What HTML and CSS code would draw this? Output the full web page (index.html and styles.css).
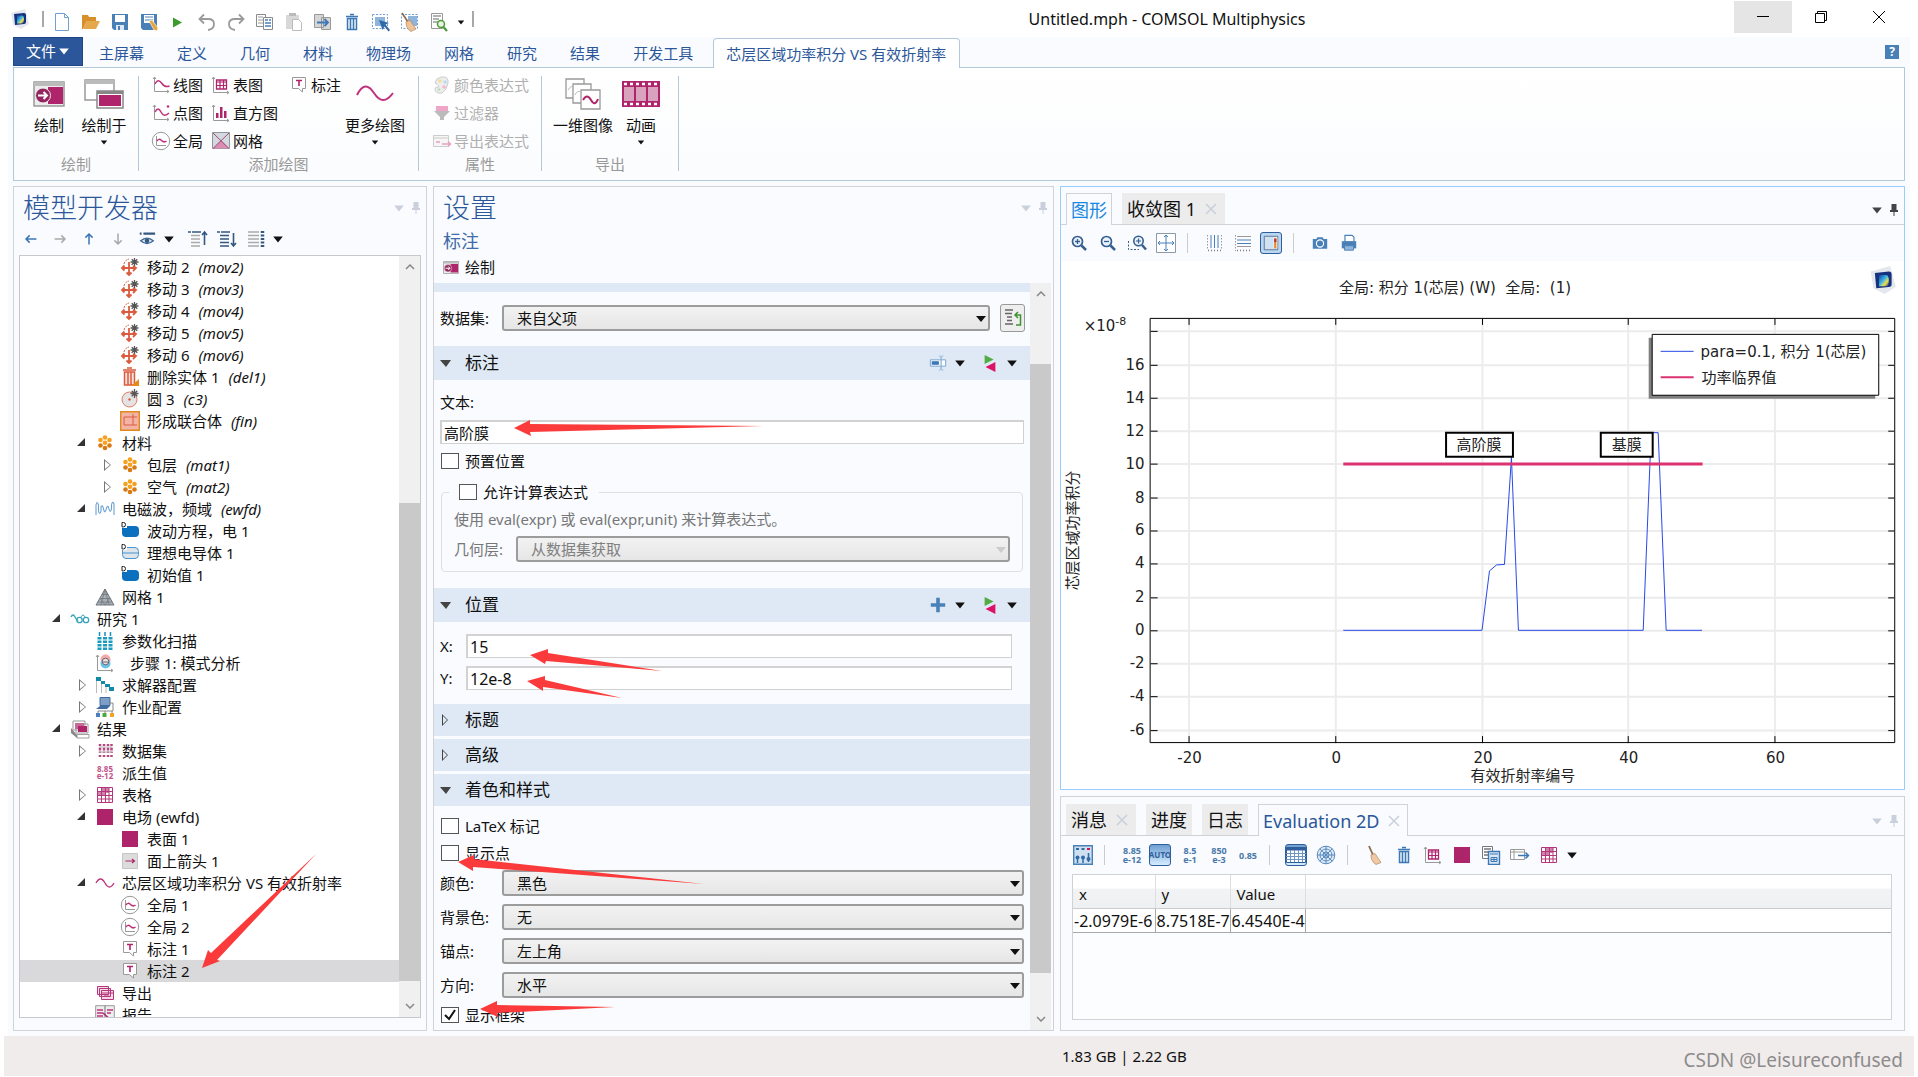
FILE: index.html
```html
<!DOCTYPE html>
<html lang="zh-CN">
<head>
<meta charset="utf-8">
<title>Untitled.mph - COMSOL Multiphysics</title>
<link rel="stylesheet" href="styles.css">
</head>
<body>
<svg class="sprite" aria-hidden="true">
  <defs>
    <linearGradient id="cube" x1="0" y1="0" x2="1" y2="1"><stop offset="0" stop-color="#1b3f9c"/><stop offset=".45" stop-color="#39b6e8"/><stop offset=".7" stop-color="#f5e04a"/><stop offset="1" stop-color="#123a92"/></linearGradient>
  </defs>
  <symbol id="logo" viewBox="0 0 20 20"><path d="M1 4 15 0l4 15-8 5-8-4z" fill="#e4e7ee"/><path d="M4 5 14 4q2 0 2 2v7q0 2-2 2L5 16z" fill="#16327f"/><path d="M7 6.500h5q2 0 2 4t-2 4H7z" fill="url(#cube)"/></symbol>
  <symbol id="new" viewBox="0 0 20 20"><path d="M3.500 1.500h9l4 4v13h-13zM12.500 1.500v4h4" fill="#fff" stroke="#6fa0d0"/></symbol>
  <symbol id="open" viewBox="0 0 20 20"><path d="M1 3h6l1 2h7v4H6l-4 8H1z" fill="#d98f2b"/><path d="M6 9h13l-4 8H2z" fill="#e3a94c"/></symbol>
  <symbol id="save" viewBox="0 0 20 20"><path d="M2 2h16v16H4l-2-2z" fill="#4a80b8"/><path d="M5 3h10v7H5z" fill="#fff"/><path d="M6 13h8v5H6z" fill="#dfe9f4"/><path d="M8 14h2v4H8z" fill="#4a80b8"/></symbol>
  <symbol id="saveas" viewBox="0 0 20 20"><path d="M2 2h16v16H4l-2-2z" fill="#4a80b8"/><path d="M5 3h10v8H5z" fill="#fff"/><path d="M6 5h8M6 8h8" stroke="#4a80b8"/><path d="m10 9 3-1 6 8-1 3-3-1z" fill="#e9a63e" stroke="#fff" stroke-width=".6"/></symbol>
  <symbol id="run" viewBox="0 0 20 20"><path d="M5 5.500 14 10.500 5 15.500z" fill="#3c9a2e"/></symbol>
  <symbol id="undo" viewBox="0 0 20 20"><path d="M3 7h8q6 0 6 5t-6 6M7 2.500 2.500 7 7 11.500" fill="none" stroke="#9a9a9a" stroke-width="1.800"/></symbol>
  <symbol id="redo" viewBox="0 0 20 20"><path d="M17 7H9q-6 0-6 5t6 6M13 2.500 17.500 7 13 11.500" fill="none" stroke="#9a9a9a" stroke-width="1.800"/></symbol>
  <symbol id="copy" viewBox="0 0 20 20"><path d="M1.500 2.500h9v12h-9z" fill="#fff" stroke="#8a8a8a"/><path d="M3 5h5M3 8h5M3 11h5" stroke="#999"/><path d="M8.500 5.500h9v12h-9z" fill="#fff" stroke="#8a8a8a"/><path d="M10 8h3M10 11h6M10 14h6M14 8h2" stroke="#4a80b8" stroke-width="1.500"/></symbol>
  <symbol id="paste" viewBox="0 0 20 20"><path d="M2 3h13v14H2z" fill="#d8d8d8"/><path d="M5 1h7v3H5z" fill="#bbb"/><path d="M8.500 7.500h6l3 3v8h-9z" fill="#fff" stroke="#bbb"/></symbol>
  <symbol id="dup" viewBox="0 0 20 20"><path d="M1.500 2.500h9v13h-9zM8.500 5.500h9v12h-9z" fill="#d6d6d6" stroke="#999"/><path d="M4 10.500h11M11.500 7l3.500 3.500-3.500 3.500" fill="none" stroke="#3d78b5" stroke-width="1.800"/></symbol>
  <symbol id="trash" viewBox="0 0 20 20"><path d="M4 4.500h12M8 2.500h4" stroke="#3d78b5" stroke-width="1.600"/><path d="M5.500 6.500h9v11h-9zM8.500 7v10M11.500 7v10" fill="#eaf3fb" stroke="#3d78b5" stroke-width="1.500"/></symbol>
  <symbol id="selbox" viewBox="0 0 20 20"><path d="M1.500 2.500h15v14h-15z" fill="none" stroke="#6fa0d0" stroke-dasharray="2 1.500"/><path d="M4 5h10v9H4z" fill="#8fb5da"/><path d="m8 8 10 3-3.500 1.500L19 18l-1.500 1.500-4-5L11.500 18z" fill="#2f6ba8"/></symbol>
  <symbol id="broomsel" viewBox="0 0 20 20"><path d="M1.500 2.500h16v14h-16z" fill="none" stroke="#6fa0d0" stroke-dasharray="2 1.500"/><path d="M8 4h9v10H8z" fill="#8fb5da"/><path d="m2 1 6 9" stroke="#8a6448" stroke-width="1.600"/><path d="m6 10 4-2 6 9-5 2.500q-5-3-5-9.500z" fill="#eec39a" stroke="#a97a50" stroke-width=".6"/></symbol>
  <symbol id="find" viewBox="0 0 20 20"><path d="M2.500 1.500h11v15h-11z" fill="#fff" stroke="#999"/><path d="M4 4h8M4 7h6M4 10h5" stroke="#999" stroke-width="1.300"/><circle cx="12" cy="12" r="3.500" fill="#e6f4e1" stroke="#4f9a3c" stroke-width="1.500"/><path d="m14.500 15 3.500 4" stroke="#4f9a3c" stroke-width="2.200"/></symbol>
  <symbol id="down" viewBox="0 0 10 10"><path d="M1 3h8L5 8z" fill="currentColor"/></symbol>
  <symbol id="pin" viewBox="0 0 10 16"><path d="M2.500 2h5v6H9v2H1V8h1.500zM4.500 10h1v4h-1z" fill="currentColor"/></symbol>
  <symbol id="plot" viewBox="0 0 32 26"><path d="M1 1h30v24H1z" fill="#ececec" stroke="#999" stroke-width="1.500"/><path d="M1 1h30v4H1z" fill="#bbb"/><path d="M15 6h15v17H15z" fill="#b0246c"/><circle cx="10" cy="14.500" r="7.500" fill="#93255f" stroke="#ececec"/><path d="M5 14.500h9M10.500 11l3.500 3.500-3.500 3.500" fill="none" stroke="#fff" stroke-width="2"/></symbol>
  <symbol id="plotin" viewBox="0 0 40 30"><path d="M1 1h29v20H1z" fill="#fff" stroke="#999" stroke-width="1.500"/><path d="M1 1h29v4H1z" fill="#bbb"/><path d="M13 12h26v17H13z" fill="#fff" stroke="#888" stroke-width="1.500"/><path d="M13 12h26v3H13z" fill="#888"/><path d="M15 16h22v11H15z" fill="#b0246c"/></symbol>
  <symbol id="line" viewBox="0 0 20 20"><path d="M3.500 2v14.500H18M2 4l1.500-2L5 4M16 15l2 1.500-2 1.500" fill="none" stroke="#999"/><path d="M4 9q3-6 6.500-1t8 3" fill="none" stroke="#c0327c" stroke-width="1.500"/></symbol>
  <symbol id="point" viewBox="0 0 20 20"><path d="M3.500 2v14.500H18M2 4l1.500-2L5 4M16 15l2 1.500-2 1.500" fill="none" stroke="#999"/><path d="M4 9q3-6 6 0t8 1" fill="none" stroke="#c0327c" stroke-width="1.500"/><circle cx="17" cy="3.500" r="1.300" fill="#c0327c"/></symbol>
  <symbol id="global" viewBox="0 0 20 20"><circle cx="10" cy="10" r="8.700" fill="#fff" stroke="#999"/><path d="M5.500 5v9.500H15" fill="none" stroke="#999"/><path d="M6 10q2-3 4.500-.5t5 .5" fill="none" stroke="#c0327c" stroke-width="1.500"/></symbol>
  <symbol id="tabplot" viewBox="0 0 20 20"><path d="M2.500 2v15.500H18M1 4l1.500-2L4 4M16 16l2 1.500-2 1.500" fill="none" stroke="#999"/><path d="M5.500 5h10v9h-10z" fill="#fff" stroke="#b0246c" stroke-width="1.300"/><path d="M5 7h11M5 10.500h11M9 5v9M12.500 5v9" stroke="#b0246c" stroke-width="1.200"/></symbol>
  <symbol id="hist" viewBox="0 0 20 20"><path d="M2.500 2v15.500H18M1 4l1.500-2L4 4M16 16l2 1.500-2 1.500" fill="none" stroke="#999"/><path d="M5 10h2.500v5H5zM9 4h2.500v11H9zM13 8h2.500v7H13z" fill="#b0246c"/></symbol>
  <symbol id="meshp" viewBox="0 0 20 20"><path d="M1.500 1.500h17v16h-17z" fill="#d3d9de" stroke="#8f979d"/><path d="M2 17.500 10 9l8 8.500z" fill="#d98fb2"/><path d="m2 2 16 15.500M18 2 2 17.500" stroke="#9f4b74" fill="none"/></symbol>
  <symbol id="note" viewBox="0 0 20 20"><path d="M3.500 2.500h13v11h-3v3.500l-4-3.500h-6z" fill="#fff" stroke="#999"/><path d="M7 5.500h6M10 5.500V11" stroke="#b0246c" stroke-width="1.600"/></symbol>
  <symbol id="wave" viewBox="0 0 38 20"><path d="M1 11Q9-5 18 9t19 0" fill="none" stroke="#c0327c" stroke-width="2"/></symbol>
  <symbol id="palette" viewBox="0 0 20 20"><path d="M9 2q8-1 7 6t-6 10Q3 19 3 14q0-2 3-2T3 8q1-5 6-6z" fill="#eee" stroke="#ccc"/><circle cx="8" cy="6" r="1.800" fill="#f5dc9a"/><circle cx="13" cy="7" r="1.800" fill="#b9dcf2"/><circle cx="12" cy="12" r="1.800" fill="#f3b9cf"/><circle cx="7" cy="14.500" r="1.600" fill="#bfe2ba"/></symbol>
  <symbol id="filter" viewBox="0 0 20 20"><path d="M4 3h12v5H4z" fill="#efa5c6"/><path d="M2 8h16l-6 6v3H8v-3z" fill="#bbb"/></symbol>
  <symbol id="expexp" viewBox="0 0 20 20"><path d="M1.500 4.500h15v11h-15zM1.500 7h15" fill="#f6f6f6" stroke="#ccc"/><path d="M4 11h4M10 13h8M16 10.500l2.500 2.500-2.500 2.500" fill="none" stroke="#e7a3c2" stroke-width="1.500"/></symbol>
  <symbol id="img1d" viewBox="0 0 36 32"><g fill="#fff" stroke="#999" stroke-width="1.300"><path d="M1 1h18v19H1z"/><path d="M8 6h18v19H8z"/><path d="M16 12h19v19H16z"/></g><path d="M3 12q3-5 6-3M10 17q2-5 6-3" fill="none" stroke="#bbb"/><path d="M18 22q4-7 8 0t7-1" fill="none" stroke="#b0246c" stroke-width="2"/></symbol>
  <symbol id="film" viewBox="0 0 38 26"><path d="M0 0h38v26H0z" fill="#b0246c"/><path d="M2 6h10v14H2zM14 6h10v14H14zM26 6h10v14H26z" fill="#d9a2bd"/><path d="M2 3h36M2 23h36" stroke="#fff" stroke-width="2.500" stroke-dasharray="3 3"/></symbol>
  <symbol id="left" viewBox="0 0 20 20"><path d="M16 10H4.500M8.500 6l-4 4 4 4" fill="none" stroke="currentColor" stroke-width="1.700"/></symbol>
  <symbol id="eye" viewBox="0 0 20 20"><path d="M2 4h2M6 4h13" stroke="#35587f" stroke-width="2.500"/><path d="M3 12q7-6 14 0-7 6-14 0z" fill="#dbe7f2" stroke="#3d6695" stroke-width="1.500"/><circle cx="10" cy="12" r="2.500" fill="#35587f"/></symbol>
  <symbol id="collapse" viewBox="0 0 20 20"><path d="M0 3h3M4 3h9" stroke="#35587f" stroke-width="1.600"/><path d="M3 6.500h9M3 10h9M3 13.500h9M3 17h9" stroke="#aaa" stroke-width="1.300"/><path d="M16.500 16V3M14 6l2.500-3L19 6" fill="none" stroke="#35587f" stroke-width="1.600"/></symbol>
  <symbol id="expand" viewBox="0 0 20 20"><path d="M0 3h3M4 3h9M3 6.500h9M3 10h9M3 13.500h9M3 17h9" stroke="#35587f" stroke-width="1.600"/><path d="M16.500 4v13M14 14l2.500 3 2.500-3" fill="none" stroke="#35587f" stroke-width="1.600"/></symbol>
  <symbol id="columns" viewBox="0 0 20 20"><path d="M2 3h11M2 6.500h11M2 10h11M2 13.500h11M2 17h11" stroke="#aaa" stroke-width="1.500"/><path d="M16.500 2v16" stroke="#35587f" stroke-width="3.500" stroke-dasharray="2 1.500"/></symbol>
  <symbol id="move" viewBox="0 0 20 20"><path d="M2 11h13M9 5v13M4.500 8.500 2 11l2.500 2.500M6.500 15.500 9 18l2.500-2.500M13 9l3 2-3 3" fill="none" stroke="#dc5b3e" stroke-width="1.800"/><path d="M4 7q1-4 5-5" fill="none" stroke="#dc5b3e" stroke-dasharray="2 1"/><path d="M14.500 1v8M10.500 5h8M11.700 2.200l5.600 5.600M17.300 2.200l-5.600 5.600" stroke="#555" stroke-width="1.300"/></symbol>
  <symbol id="del" viewBox="0 0 20 20"><path d="M3 3h13M7 1h5" stroke="#dc5b3e" stroke-width="1.500"/><path d="M4.500 5h10v13h-10zM8 5v13M11 5v13" fill="#fbe3dc" stroke="#dc5b3e" stroke-width="1.500"/><path d="M19 12v7h-8z" fill="#e58a1c"/></symbol>
  <symbol id="circle" viewBox="0 0 20 20"><circle cx="9.500" cy="10.500" r="7.500" fill="#e3e3e3" stroke="#e07a62"/><circle cx="9.500" cy="10.500" r="1.200" fill="#dc5b3e"/><path d="M14.500 0v9M10.500 4.500h8M11.700 1.700l5.600 5.600M17.300 1.700l-5.600 5.600" stroke="#555" stroke-width="1.300"/></symbol>
  <symbol id="union" viewBox="0 0 20 20"><path d="M.7.700h18.600v18.600H.7z" fill="#f3b3a5" stroke="#e0891d" stroke-width="1.400"/><path d="M4 6h13M4 14h13M4 6v8M13 3v11" fill="none" stroke="#dc5b3e"/></symbol>
  <symbol id="mat" viewBox="0 0 20 20"><g fill="#f6a11e"><circle cx="10" cy="4.500" r="2.300"/><circle cx="5.500" cy="7" r="2.300"/><circle cx="14.500" cy="7" r="2.300"/><circle cx="10" cy="9.800" r="2.300"/></g><g fill="#d87a14"><circle cx="5.500" cy="12.500" r="2.300"/><circle cx="14.500" cy="12.500" r="2.300"/><circle cx="10" cy="15" r="2.300"/></g></symbol>
  <symbol id="emw" viewBox="0 0 20 20"><path d="M1 16V6q1-5 2.500 0v6q1 5 2.500 0V8q1.500-3 2.500 2 1.500 6 3-1 1.500-4 2.500 1 1 5 2.500 0V6q1-5 2.500-1v11" fill="none" stroke="#6ba1d2" stroke-width="1.100"/></symbol>
  <symbol id="dom" viewBox="0 0 20 20"><path d="M4 5h11q4 0 4 4v3q0 4-4 4H6q-4 0-4-4V5z" fill="#0b70bd"/><path d="M1 1h6v6H1z" fill="#fff"/><path d="M2 1.500h1.500q2 0 2 2.200t-2 2.200H2z" fill="none" stroke="#222"/></symbol>
  <symbol id="bnd" viewBox="0 0 20 20"><path d="M4 4.500h11q3.500 0 3.500 4v3q0 4-3.500 4H6q-3.500 0-3.500-4v-6zM2.500 10h16" fill="#dde4ea" stroke="#4b94ce"/><path d="M1 1h6v6H1z" fill="#fff"/><path d="M2 1.500h1.500q2 0 2 2.200t-2 2.200H2z" fill="none" stroke="#222"/></symbol>
  <symbol id="mesh" viewBox="0 0 20 20"><path d="M10 2 19 18H1z" fill="#a9b0b6" stroke="#70777d"/><path d="M7 7.500h6M5 11.500h10M3 15h14M10 2 6 18M10 2l4 16M5 11l5 7 5-7" fill="none" stroke="#70777d" stroke-width=".8"/></symbol>
  <symbol id="study" viewBox="0 0 20 20"><path d="M1 8q2-4 4 0t3 3" fill="none" stroke="#39a3ba" stroke-width="1.300"/><circle cx="9.500" cy="11" r="2.700" fill="none" stroke="#39a3ba" stroke-width="1.300"/><circle cx="16" cy="11" r="2.700" fill="none" stroke="#39a3ba" stroke-width="1.300"/><path d="M11 8q2-4 4 0" fill="none" stroke="#39a3ba"/></symbol>
  <symbol id="sweep" viewBox="0 0 20 20"><path d="M4.500 1v4M10 1v4M15.500 1v4" stroke="#1a8fb8" stroke-width="1.500"/><path d="M4.500 6v13M10 6v13M15.500 6v13" stroke="#1a9cc0" stroke-width="4" stroke-dasharray="2.500 1"/></symbol>
  <symbol id="eig" viewBox="0 0 20 20"><path d="M2.500 2v15.500H18M1 4l1.500-2L4 4M16 16l2 1.500-2 1.500" fill="none" stroke="#999"/><circle cx="10.500" cy="6.500" r="5" fill="#f3a9a9"/><circle cx="10.500" cy="10.500" r="5" fill="#6cc3e3"/><circle cx="10.500" cy="8.500" r="3.300" fill="#f4dede" stroke="#667"/><path d="M7.500 9h6" stroke="#667"/></symbol>
  <symbol id="solver" viewBox="0 0 20 20"><path d="M1.500 4v14M6.500 8v10M11 11v7" stroke="#bbb"/><path d="M1 2h5v4H1zM6 6h4v3H6zM10 9h5v3h-5zM14 12h5v4h-5z" fill="#118aa8"/></symbol>
  <symbol id="job" viewBox="0 0 20 20"><path d="M5 .5h10v8H5z" fill="#7d9fc5" stroke="#3f6ca0"/><path d="m1 12 4-3h10l-3 3z" fill="#3f6ca0"/><path d="M14 6h4v8H3v3M10 14v3M17 14v3" fill="none" stroke="#888"/><path d="M1 16h4v4H1z" fill="#4a80c0"/><path d="M7.500 16h4v4h-4z" fill="#4faa3c"/><path d="M15 16h4v4h-4z" fill="#f0a422"/></symbol>
  <symbol id="results" viewBox="0 0 20 20"><path d="M3 2h12v9H3zM6 5h12v9H6z" fill="#fff" stroke="#999"/><path d="M5 4h9v6H5z" fill="#c86a97"/><path d="M8 7h9v6H8z" fill="#b0246c"/><path d="M1 9l6 7v3l-6-5z" fill="#888"/><path d="M7 15.500h12v3.500H7z" fill="#fff" stroke="#888" stroke-width=".8"/></symbol>
  <symbol id="data" viewBox="0 0 20 20"><path d="M5 3v14M9 3v14M13 3v14M16.500 3v14" stroke="#b5467f" stroke-width="2.500" stroke-dasharray="2 1.500 3 1 1.500 2"/><path d="M4 6h13M4 11h13" stroke="#bbb"/></symbol>
  <symbol id="table" viewBox="0 0 20 20"><path d="M2.500 2.500h15v15h-15z" fill="#fff" stroke="#b5367a"/><path d="M6 3h8v5H6zM3 6h8v4H3z" fill="#cf82aa"/><path d="M2 6.500h16M2 10.500h16M2 14h16M6.500 2v16M10.500 2v16M14 2v16" stroke="#b5367a"/></symbol>
  <symbol id="surf" viewBox="0 0 20 20"><path d="M2 2h16v16H2z" fill="#ad246b"/></symbol>
  <symbol id="arrsurf" viewBox="0 0 20 20"><path d="M2.500 2.500h15v15h-15z" fill="#dcdcdc" stroke="#c6c6c6"/><path d="M5.500 10h8M12 8l2.500 2-2.500 2" fill="none" stroke="#b0246c" stroke-width="1.200"/></symbol>
  <symbol id="w1" viewBox="0 0 20 20"><path d="M1 10q4.500-8 9 0t9 0" fill="none" stroke="#c0327c" stroke-width="1.300"/></symbol>
  <symbol id="export" viewBox="0 0 20 20"><path d="M2.500 3.500h11v8h-11zM4.500 5.500h11v8h-11zM6.500 7.500h12v9h-12zM6.500 10h12M9 13h5" fill="#f6dbe7" stroke="#b5367a"/></symbol>
  <symbol id="report" viewBox="0 0 20 20"><path d="M.7.700H10v18H.7zM10 .7h9.300v18H10z" fill="#eee" stroke="#999"/><path d="M2 5h6M2 8h6M2 11h6M12 5h6M12 8h4M2 14h6" stroke="#c0327c" stroke-width="1.500"/><path d="m8 8 9 8" stroke="#b0246c" stroke-width="1.500"/></symbol>
  <symbol id="rename" viewBox="0 0 20 20"><path d="M1.500 6.500h17v7h-17z" fill="#fff" stroke="#6fa0d0"/><path d="M3 8h8v4H3z" fill="#3d78b5"/><path d="M11 2q2.500 0 2.500 2v12q0 2-2.500 2M16 2q-2.500 0-2.500 2v12q0 2 2.500 2" fill="none" stroke="#8fb5da"/></symbol>
  <symbol id="gopair" viewBox="0 0 20 20"><path d="M4 1 14 6 4 11z" fill="#52ab43"/><path d="M16 9v11L5 14.500z" fill="#dc1267"/></symbol>
  <symbol id="plus" viewBox="0 0 20 20"><path d="M10 2v16M2 10h16" stroke="#4a80b8" stroke-width="4"/></symbol>
  <symbol id="goto" viewBox="0 0 20 20"><path d="M2 2h8M2 5.500h7M4 9h5M4 12.500h5M2 16h8" stroke="#666" stroke-width="1.400"/><path d="M13 17h4.500V7H12M15 4l-3 3 3 3" fill="none" stroke="#3f9232" stroke-width="1.500"/></symbol>
  <symbol id="zin" viewBox="0 0 20 20"><circle cx="8.500" cy="8.500" r="5" fill="#eaf2fa" stroke="#345f90" stroke-width="1.700"/><path d="M6 8.500h5M8.500 6v5" stroke="#345f90" stroke-width="1.300"/><path d="m12.500 12.500 4.500 4.500" stroke="#345f90" stroke-width="2.500"/></symbol>
  <symbol id="zout" viewBox="0 0 20 20"><circle cx="8.500" cy="8.500" r="5" fill="#eaf2fa" stroke="#345f90" stroke-width="1.700"/><path d="M6 8.500h5" stroke="#345f90" stroke-width="1.300"/><path d="m12.500 12.500 4.500 4.500" stroke="#345f90" stroke-width="2.500"/></symbol>
  <symbol id="zbox" viewBox="0 0 20 20"><path d="M1.500 8v8.500H12" fill="none" stroke="#345f90" stroke-dasharray="2 1.500"/><circle cx="11.500" cy="8" r="4.700" fill="#eaf2fa" stroke="#345f90" stroke-width="1.600"/><path d="M9 8h5M11.500 5.500v5" stroke="#345f90" stroke-width="1.200"/><path d="m15 12 4 4.500" stroke="#345f90" stroke-width="2.500"/></symbol>
  <symbol id="fit" viewBox="0 0 20 20"><path d="M.5.500h19v19H.5z" fill="#fff" stroke="#8c99a6"/><path d="M10 2v16M2 10h16M8 4l2-2 2 2M8 16l2 2 2-2M4 8l-2 2 2 2M16 8l2 2-2 2" fill="none" stroke="#4a80b8"/></symbol>
  <symbol id="xgrid" viewBox="0 0 20 20"><path d="M3.500 2v14M17.500 2v14" stroke="#999" stroke-dasharray="1.500 1.500"/><path d="M7 2v13M10.500 2v13M14 2v13" stroke="#4a80b8"/><path d="M4 17.500h15" stroke="#777" stroke-width="1.500" stroke-dasharray="1 2"/></symbol>
  <symbol id="ygrid" viewBox="0 0 20 20"><path d="M2.500 2v16" stroke="#999" stroke-dasharray="1.500 1.500"/><path d="M4 3.500h14M4 13.500h14" stroke="#999"/><path d="M4 7h14M4 10.500h14" stroke="#4a80b8"/><path d="M4 17.500h15" stroke="#777" stroke-width="1.500" stroke-dasharray="1 2"/></symbol>
  <symbol id="legendi" viewBox="0 0 20 20"><path d="M2.500 2.500h15v15h-15z" fill="#cfe2f5" stroke="#5a6f86"/><path d="M13 4h4v12h-4z" fill="#fff"/><path d="M13.500 5H16v11h-2.500z" fill="#e8862c"/><path d="M13.500 5H16v4h-2.500z" fill="#b8362c"/></symbol>
  <symbol id="camera" viewBox="0 0 20 20"><path d="M2 5.500h4l1-2h6l1 2h4v11H2z" fill="#4a80b8"/><circle cx="10" cy="10.500" r="4" fill="#4a80b8" stroke="#fff" stroke-width="1.300"/></symbol>
  <symbol id="printer" viewBox="0 0 20 20"><path d="M5.500 1.500h8l2 2V9h-10z" fill="#fff" stroke="#4a80b8" stroke-width="1.300"/><path d="M2 8h16v8H2z" fill="#4a80b8"/><path d="M5 13h10v5H5z" fill="#8fb5da" stroke="#4a80b8"/></symbol>
  <symbol id="prec" viewBox="0 0 20 20"><path d="M.7.700h18.600v18.600H.7z" fill="#cfe0f1" stroke="#4a80b8" stroke-width="1.400"/><path d="M3 4h3M8.500 4h3" stroke="#2f6ba8" stroke-width="2"/><path d="M14 4h3" stroke="#d3164f" stroke-width="2"/><path d="M4.500 14v4M10 14v4M15.500 8v9" stroke="#2f6ba8" stroke-width="1.500"/><circle cx="4.500" cy="12.500" r="2" fill="#2f6ba8"/><circle cx="10" cy="12.500" r="2" fill="#2f6ba8"/><circle cx="15.500" cy="14" r="2" fill="#2f6ba8"/></symbol>
  <symbol id="gridv" viewBox="0 0 20 20"><path d="M.5 2.500h19v15H.5z" fill="#fff" stroke="#2f5f9a"/><path d="M.5 2.500h19v3H.5z" fill="#2f5f9a"/><path d="M0 8.500h20M0 11.500h20M0 14.500h20M4.500 5v12M8.500 5v12M12.500 5v12M16.500 5v12" stroke="#6b95c4"/></symbol>
  <symbol id="polar" viewBox="0 0 20 20"><g fill="none" stroke="#5a8cc0"><circle cx="10" cy="10" r="8.800" fill="#dfeaf6"/><circle cx="10" cy="10" r="6"/><circle cx="10" cy="10" r="3"/><path d="M10 1v18M1 10h18M3.700 3.700l12.600 12.600M16.300 3.700 3.700 16.300"/></g></symbol>
  <symbol id="broom" viewBox="0 0 20 20"><path d="m4 1 4 9" stroke="#8a6a4c" stroke-width="1.800"/><path d="m6 10 4-1.500 6 9-5 2q-5-3-5-9.500z" fill="#f0c9a4" stroke="#b08660" stroke-width=".7"/></symbol>
  <symbol id="copytab" viewBox="0 0 20 20"><path d="M1.500 1.500h10v12h-10z" fill="#fff" stroke="#777"/><path d="M3 4h7M3 7h4M3 10h4" stroke="#777" stroke-width="1.400"/><path d="M7.500 6.500h11v13h-11z" fill="#dbe8f5" stroke="#3d78b5" stroke-width="1.400"/><path d="M9 9h8M10 12.500h6v4h-6zM13 12v5M10 14.500h6" fill="none" stroke="#3d78b5"/></symbol>
  <symbol id="exptab" viewBox="0 0 20 20"><path d="M.5 4.500h14v10H.5zM.5 7h14M4 5v9" fill="#fff" stroke="#999"/><path d="M8 10.500h10.500M15.500 7.500l3 3-3 3" fill="none" stroke="#3d78b5" stroke-width="1.500"/></symbol>
</svg>

<header class="titlebar">
  <nav class="quick" aria-label="快速访问">
    <svg class="i20"><use href="#logo"/></svg><span class="bar"></span>
    <button aria-label="新建"><svg class="i20"><use href="#new"/></svg></button>
    <button aria-label="打开"><svg class="i20"><use href="#open"/></svg></button>
    <button aria-label="保存"><svg class="i20"><use href="#save"/></svg></button>
    <button aria-label="另存为"><svg class="i20"><use href="#saveas"/></svg></button>
    <button aria-label="运行"><svg class="i20"><use href="#run"/></svg></button>
    <button aria-label="撤消"><svg class="i20"><use href="#undo"/></svg></button>
    <button aria-label="重做"><svg class="i20"><use href="#redo"/></svg></button>
    <button aria-label="复制"><svg class="i20"><use href="#copy"/></svg></button>
    <button aria-label="粘贴"><svg class="i20"><use href="#paste"/></svg></button>
    <button aria-label="复制粘贴"><svg class="i20"><use href="#dup"/></svg></button>
    <button aria-label="删除"><svg class="i20"><use href="#trash"/></svg></button>
    <button aria-label="选择框"><svg class="i20"><use href="#selbox"/></svg></button>
    <button aria-label="清除选择"><svg class="i20"><use href="#broomsel"/></svg></button>
    <button aria-label="查找"><svg class="i20"><use href="#find"/></svg></button>
    <button class="narrow" aria-label="更多"><svg class="i8"><use href="#down"/></svg></button><span class="bar"></span>
  </nav>
  <h1 class="doc-title">Untitled.mph - COMSOL Multiphysics</h1>
  <div class="winctl">
    <button class="hot" aria-label="最小化"><svg width="12" height="12"><path d="M0 5.500h12" stroke="#000"/></svg></button>
    <button aria-label="还原"><svg width="12" height="12"><path d="M.5 2.500h9v9h-9zM2.500 2.500v-2h9v9h-2" fill="none" stroke="#000"/></svg></button>
    <button aria-label="关闭"><svg width="12" height="12"><path d="m0 0 12 12M12 0 0 12" stroke="#000"/></svg></button>
  </div>
</header>

<div class="app">
  <nav class="tabs">
    <button class="file">文件<svg class="i12"><use href="#down"/></svg></button>
    <a href="#home">主屏幕</a><a href="#def">定义</a><a href="#geom">几何</a><a href="#mats">材料</a><a href="#phys">物理场</a><a href="#meshtab">网格</a><a href="#studytab">研究</a><a href="#res">结果</a><a href="#dev">开发工具</a><a class="on" href="#plotgroup">芯层区域功率积分 VS 有效折射率</a>
    <button class="help" aria-label="帮助">?</button>
  </nav>
  <section class="ribbon">
    <div class="group g-plot">
      <div class="tools">
        <button class="big"><svg class="bi" width="32" height="26"><use href="#plot"/></svg>绘制</button>
        <button class="big"><svg class="bi" width="40" height="30"><use href="#plotin"/></svg>绘制于<svg class="i8"><use href="#down"/></svg></button>
      </div>
      <h2>绘制</h2>
    </div>
    <div class="group g-add">
      <div class="tools">
        <div class="stack"><button><svg class="i20"><use href="#line"/></svg>线图</button><button><svg class="i20"><use href="#point"/></svg>点图</button><button><svg class="i20"><use href="#global"/></svg>全局</button></div>
        <div class="stack wide"><button><svg class="i20"><use href="#tabplot"/></svg>表图</button><button><svg class="i20"><use href="#hist"/></svg>直方图</button><button><svg class="i20"><use href="#meshp"/></svg>网格</button></div>
        <div class="stack"><button><svg class="i20"><use href="#note"/></svg>标注</button></div>
        <button class="big"><svg class="bi" width="38" height="20"><use href="#wave"/></svg>更多绘图<svg class="i8"><use href="#down"/></svg></button>
      </div>
      <h2>添加绘图</h2>
    </div>
    <div class="group g-attr">
      <div class="tools">
        <div class="stack"><button disabled><svg class="i20"><use href="#palette"/></svg>颜色表达式</button><button disabled><svg class="i20"><use href="#filter"/></svg>过滤器</button><button disabled><svg class="i20"><use href="#expexp"/></svg>导出表达式</button></div>
      </div>
      <h2>属性</h2>
    </div>
    <div class="group g-exp">
      <div class="tools">
        <button class="big"><svg class="bi" width="36" height="32"><use href="#img1d"/></svg>一维图像</button>
        <button class="big"><svg class="bi" width="38" height="26"><use href="#film"/></svg>动画<svg class="i8"><use href="#down"/></svg></button>
      </div>
      <h2>导出</h2>
    </div>
  </section>

  <main class="work">
    <section class="panel model">
      <header class="phead"><h2>模型开发器</h2><span class="pins"><svg class="i12"><use href="#down"/></svg><svg class="pin"><use href="#pin"/></svg></span></header>
      <div class="mtools">
        <button aria-label="后退" class="blue"><svg class="i18"><use href="#left"/></svg></button>
        <button aria-label="前进" class="grey r180"><svg class="i18"><use href="#left"/></svg></button>
        <button aria-label="上移" class="blue r90"><svg class="i18"><use href="#left"/></svg></button>
        <button aria-label="下移" class="grey r270"><svg class="i18"><use href="#left"/></svg></button>
        <button aria-label="显示"><svg class="i18"><use href="#eye"/></svg></button>
        <button class="slim" aria-label="显示选项"><svg class="i12"><use href="#down"/></svg></button>
        <button aria-label="全部折叠"><svg class="i20"><use href="#collapse"/></svg></button>
        <button aria-label="全部展开"><svg class="i20"><use href="#expand"/></svg></button>
        <button aria-label="列"><svg class="i20"><use href="#columns"/></svg></button>
        <button class="slim" aria-label="列选项"><svg class="i12"><use href="#down"/></svg></button>
      </div>
      <div class="treebox">
        <ul class="tree">
          <li class="d2"><i></i><svg class="i20"><use href="#move"/></svg>移动 2<em>(mov2)</em></li>
          <li class="d2"><i></i><svg class="i20"><use href="#move"/></svg>移动 3<em>(mov3)</em></li>
          <li class="d2"><i></i><svg class="i20"><use href="#move"/></svg>移动 4<em>(mov4)</em></li>
          <li class="d2"><i></i><svg class="i20"><use href="#move"/></svg>移动 5<em>(mov5)</em></li>
          <li class="d2"><i></i><svg class="i20"><use href="#move"/></svg>移动 6<em>(mov6)</em></li>
          <li class="d2"><i></i><svg class="i20"><use href="#del"/></svg>删除实体 1<em>(del1)</em></li>
          <li class="d2"><i></i><svg class="i20"><use href="#circle"/></svg>圆 3<em>(c3)</em></li>
          <li class="d2"><i></i><svg class="i20"><use href="#union"/></svg>形成联合体<em>(fin)</em></li>
          <li class="d1"><i class="open"></i><svg class="i20"><use href="#mat"/></svg>材料</li>
          <li class="d2"><i class="shut"></i><svg class="i20"><use href="#mat"/></svg>包层<em>(mat1)</em></li>
          <li class="d2"><i class="shut"></i><svg class="i20"><use href="#mat"/></svg>空气<em>(mat2)</em></li>
          <li class="d1"><i class="open"></i><svg class="i20"><use href="#emw"/></svg>电磁波，频域<em>(ewfd)</em></li>
          <li class="d2"><i></i><svg class="i20"><use href="#dom"/></svg>波动方程，电 1</li>
          <li class="d2"><i></i><svg class="i20"><use href="#bnd"/></svg>理想电导体 1</li>
          <li class="d2"><i></i><svg class="i20"><use href="#dom"/></svg>初始值 1</li>
          <li class="d1"><i></i><svg class="i20"><use href="#mesh"/></svg>网格 1</li>
          <li><i class="open"></i><svg class="i20"><use href="#study"/></svg>研究 1</li>
          <li class="d1"><i></i><svg class="i20"><use href="#sweep"/></svg>参数化扫描</li>
          <li class="d1 step"><i></i><svg class="i20"><use href="#eig"/></svg>步骤 1: 模式分析</li>
          <li class="d1"><i class="shut"></i><svg class="i20"><use href="#solver"/></svg>求解器配置</li>
          <li class="d1"><i class="shut"></i><svg class="i20"><use href="#job"/></svg>作业配置</li>
          <li><i class="open"></i><svg class="i20"><use href="#results"/></svg>结果</li>
          <li class="d1"><i class="shut"></i><svg class="i20"><use href="#data"/></svg>数据集</li>
          <li class="d1"><i></i><svg class="i20" viewBox="0 0 20 20"><text class="glyph pink" x="10" y="9">8.85</text><text class="glyph pink" x="10" y="16">e-12</text></svg>派生值</li>
          <li class="d1"><i class="shut"></i><svg class="i20"><use href="#table"/></svg>表格</li>
          <li class="d1"><i class="open"></i><svg class="i20"><use href="#surf"/></svg>电场 (ewfd)</li>
          <li class="d2"><i></i><svg class="i20"><use href="#surf"/></svg>表面 1</li>
          <li class="d2"><i></i><svg class="i20"><use href="#arrsurf"/></svg>面上箭头 1</li>
          <li class="d1"><i class="open"></i><svg class="i20"><use href="#w1"/></svg>芯层区域功率积分 VS 有效折射率</li>
          <li class="d2"><i></i><svg class="i20"><use href="#global"/></svg>全局 1</li>
          <li class="d2"><i></i><svg class="i20"><use href="#global"/></svg>全局 2</li>
          <li class="d2"><i></i><svg class="i20"><use href="#note"/></svg>标注 1</li>
          <li class="d2 sel"><i></i><svg class="i20"><use href="#note"/></svg>标注 2</li>
          <li class="d1"><i></i><svg class="i20"><use href="#export"/></svg>导出</li>
          <li class="d1"><i></i><svg class="i20"><use href="#report"/></svg>报告</li>
        </ul>
        <div class="scroll tree-scroll"><svg class="chev" viewBox="0 0 10 6"><path d="m1 5 4-4 4 4"/></svg><span class="thumb"></span><svg class="chev" viewBox="0 0 10 6"><path d="m1 1 4 4 4-4"/></svg></div>
      </div>
      <svg class="marks" aria-hidden="true"><g transform="translate(-14 -187)"><path d="M316 854 217 960l3 1-18 7 6-18 3 3z"/></g></svg>
    </section>

    <section class="panel settings">
      <header class="phead"><h2>设置</h2><span class="pins"><svg class="i12"><use href="#down"/></svg><svg class="pin"><use href="#pin"/></svg></span></header>
      <p class="sub">标注</p>
      <button class="plotbtn"><svg width="16" height="13"><use href="#plot"/></svg>绘制</button>
      <div class="sbody">
        <form class="form">
          <h3 class="sec cut">数据</h3>
          <div class="body b-data">
            <div class="row"><label for="ds">数据集:</label><span class="sel-wrap"><select id="ds"><option>来自父项</option></select></span><button type="button" class="goto" aria-label="转到源"><svg class="i20"><use href="#goto"/></svg></button></div>
          </div>
          <h3 class="sec"><i class="tri"></i>标注<span class="acts"><svg class="i18"><use href="#rename"/></svg><svg class="i12"><use href="#down"/></svg><svg class="i18"><use href="#gopair"/></svg><svg class="i12"><use href="#down"/></svg></span></h3>
          <div class="body b-note">
            <label for="txt">文本:</label>
            <input id="txt" type="text" value="高阶膜">
            <label class="check"><input type="checkbox">预置位置</label>
            <fieldset>
              <legend><label class="check"><input type="checkbox">允许计算表达式</label></legend>
              <p>使用 eval(expr) 或 eval(expr,unit) 来计算表达式。</p>
              <div class="row"><label for="lv">几何层:</label><span class="sel-wrap off"><select id="lv" disabled><option>从数据集获取</option></select></span></div>
            </fieldset>
          </div>
          <h3 class="sec"><i class="tri"></i>位置<span class="acts"><svg class="i18"><use href="#plus"/></svg><svg class="i12"><use href="#down"/></svg><svg class="i18"><use href="#gopair"/></svg><svg class="i12"><use href="#down"/></svg></span></h3>
          <div class="body b-pos">
            <div class="row"><label for="px">X:</label><input id="px" type="text" value="15"></div>
            <div class="row"><label for="py">Y:</label><input id="py" type="text" value="12e-8"></div>
          </div>
          <h3 class="sec low"><i class="tri shut"></i>标题</h3>
          <h3 class="sec low"><i class="tri shut"></i>高级</h3>
          <h3 class="sec low last"><i class="tri"></i>着色和样式</h3>
          <div class="body b-style">
            <label class="check"><input type="checkbox">LaTeX 标记</label>
            <label class="check"><input type="checkbox">显示点</label>
            <div class="row"><label for="c1">颜色:</label><span class="sel-wrap"><select id="c1"><option>黑色</option></select></span></div>
            <div class="row"><label for="c2">背景色:</label><span class="sel-wrap"><select id="c2"><option>无</option></select></span></div>
            <div class="row"><label for="c3">锚点:</label><span class="sel-wrap"><select id="c3"><option>左上角</option></select></span></div>
            <div class="row"><label for="c4">方向:</label><span class="sel-wrap"><select id="c4"><option>水平</option></select></span></div>
            <label class="check"><input type="checkbox" checked>显示框架</label>
          </div>
        </form>
        <div class="scroll set-scroll"><svg class="chev" viewBox="0 0 10 6"><path d="m1 5 4-4 4 4"/></svg><span class="thumb"></span><svg class="chev" viewBox="0 0 10 6"><path d="m1 1 4 4 4-4"/></svg></div>
      </div>
      <svg class="marks" aria-hidden="true"><g transform="translate(-434 -187)">
        <path d="m514 428 16-8v4l233 2-233 6 1 4z"/>
        <path d="m530 655 18-6v4l114 18-116-10-1 3z"/>
        <path d="m527 681 18-5v4l77 18-79-11v4z"/>
        <path d="m458 862 16-7v4l230 25-231-17v4z"/>
        <path d="m480 1009 17-8v4l118 2-118 6 1 4z"/>
      </g></svg>
    </section>

    <div class="right">
      <section class="panel graphics">
        <div class="ptabs"><button class="on sky">图形</button><button>收敛图 1<svg class="x" viewBox="0 0 12 12"><path d="m1 1 10 10M11 1 1 11"/></svg></button><span class="pins dark"><svg class="i12"><use href="#down"/></svg><svg class="pin"><use href="#pin"/></svg></span></div>
        <div class="ptools">
          <button aria-label="放大"><svg class="i20"><use href="#zin"/></svg></button>
          <button aria-label="缩小"><svg class="i20"><use href="#zout"/></svg></button>
          <button aria-label="框选缩放"><svg class="i20"><use href="#zbox"/></svg></button>
          <button aria-label="缩放到窗口"><svg class="i20"><use href="#fit"/></svg></button>
          <span class="sep"></span>
          <button aria-label="x 网格"><svg class="i20"><use href="#xgrid"/></svg></button>
          <button aria-label="y 网格"><svg class="i20"><use href="#ygrid"/></svg></button>
          <button aria-label="图例" class="down"><svg class="i18"><use href="#legendi"/></svg></button>
          <span class="sep"></span>
          <button aria-label="快照"><svg class="i18"><use href="#camera"/></svg></button>
          <button aria-label="打印"><svg class="i18"><use href="#printer"/></svg></button>
        </div>
        <svg class="chart" viewBox="1061 260 843 529" role="img" aria-label="芯层区域功率积分">
          <text x="1455" y="292" text-anchor="middle" xml:space="preserve">全局: 积分 1(芯层) (W)  全局:  (1)</text>
          <svg x="1870" y="265" width="28" height="28"><use href="#logo"/></svg>
          <path class="grid" d="M1188.500 318v425M1335.500 318v425M1482.500 318v425M1628.500 318v425M1775.500 318v425M1150 330.500h745M1150 364.500h745M1150 397.500h745M1150 430.500h745M1150 463.500h745M1150 497.500h745M1150 530.500h745M1150 563.500h745M1150 597.500h745M1150 630.500h745M1150 663.500h745M1150 696.500h745M1150 730.500h745"/>
          <path class="axis" d="M1149.500 317.500h746v425h-746zM1188.500 318v6M1335.500 318v6M1482.500 318v6M1628.500 318v6M1775.500 318v6M1188.500 743v-7M1335.500 743v-7M1482.500 743v-7M1628.500 743v-7M1775.500 743v-7M1150 330.500h7M1150 364.500h7M1150 397.500h7M1150 430.500h7M1150 463.500h7M1150 497.500h7M1150 530.500h7M1150 563.500h7M1150 597.500h7M1150 630.500h7M1150 663.500h7M1150 696.500h7M1150 730.500h7M1889 330.500h6M1889 364.500h6M1889 397.500h6M1889 430.500h6M1889 463.500h6M1889 497.500h6M1889 530.500h6M1889 563.500h6M1889 597.500h6M1889 630.500h6M1889 663.500h6M1889 696.500h6M1889 730.500h6"/>
          <g text-anchor="end">
            <text x="1144" y="369">16</text><text x="1144" y="402">14</text><text x="1144" y="435">12</text><text x="1144" y="468">10</text><text x="1144" y="502">8</text><text x="1144" y="535">6</text><text x="1144" y="568">4</text><text x="1144" y="602">2</text><text x="1144" y="635">0</text><text x="1144" y="668">-2</text><text x="1144" y="701">-4</text><text x="1144" y="735">-6</text>
          </g>
          <g text-anchor="middle">
            <text x="1189" y="763">-20</text><text x="1336" y="763">0</text><text x="1483" y="763">20</text><text x="1629" y="763">40</text><text x="1776" y="763">60</text>
            <text x="1523" y="781">有效折射率编号</text>
            <text transform="translate(1077 530) rotate(-90)">芯层区域功率积分</text>
          </g>
          <text x="1083" y="330">×10<tspan class="sup" dy="-6">-8</tspan></text>
          <path class="blue-line" d="M1343 630h139l7.500-59.500 7-6 8-.5 7-107 7 173h125l8-198h7l8 198h36"/>
          <path class="pink-line" d="M1343 463.500h360"/>
          <g class="tag"><path d="M1446 432h67v24h-67z"/><text x="1479" y="449">高阶膜</text><path d="M1601 432h52v24h-52z"/><text x="1627" y="449">基膜</text></g>
          <path d="M1649 337h227v61h-227z" fill="#808080"/>
          <path d="M1652.500 333.500h227v61h-227z" fill="#fff" stroke="#000"/>
          <path class="blue-line" d="M1661 350.500h33"/><path class="pink-thin" d="M1661 376.500h33"/>
          <text x="1701" y="356">para=0.1, 积分 1(芯层)</text><text x="1702" y="382">功率临界值</text>
        </svg>
      </section>
      <section class="panel msgs">
        <div class="ptabs"><button>消息<svg class="x" viewBox="0 0 12 12"><path d="m1 1 10 10M11 1 1 11"/></svg></button><button>进度</button><button>日志</button><button class="on">Evaluation 2D<svg class="x" viewBox="0 0 12 12"><path d="m1 1 10 10M11 1 1 11"/></svg></button><span class="pins"><svg class="i12"><use href="#down"/></svg><svg class="pin"><use href="#pin"/></svg></span></div>
        <div class="ptools">
          <button aria-label="全精度"><svg class="i20"><use href="#prec"/></svg></button>
          <span class="sep"></span>
          <button><svg class="i20" viewBox="0 0 20 20"><text class="glyph big" x="10" y="9">8.85</text><text class="glyph big" x="10" y="18">e-12</text></svg></button>
          <button class="down deep"><svg class="i20" viewBox="0 0 20 20"><text class="glyph auto" x="10" y="13">AUTO</text></svg></button>
          <button><svg class="i20" viewBox="0 0 20 20"><text class="glyph big" x="10" y="9">8.5</text><text class="glyph big" x="10" y="18">e-1</text></svg></button>
          <button><svg class="i20" viewBox="0 0 20 20"><text class="glyph big" x="10" y="9">850</text><text class="glyph big" x="10" y="18">e-3</text></svg></button>
          <button><svg class="i20" viewBox="0 0 20 20"><text class="glyph big" x="10" y="14">0.85</text></svg></button>
          <span class="sep"></span>
          <button aria-label="直角" class="down deep"><svg class="i20"><use href="#gridv"/></svg></button>
          <button aria-label="极坐标"><svg class="i20"><use href="#polar"/></svg></button>
          <span class="sep"></span>
          <button aria-label="清除"><svg class="i20"><use href="#broom"/></svg></button>
          <button aria-label="删除表格"><svg class="i20"><use href="#trash"/></svg></button>
          <button aria-label="表图"><svg class="i20"><use href="#tabplot"/></svg></button>
          <button aria-label="表面图"><svg class="i20"><use href="#surf"/></svg></button>
          <button aria-label="复制表格"><svg class="i20"><use href="#copytab"/></svg></button>
          <button aria-label="导出表格"><svg class="i20"><use href="#exptab"/></svg></button>
          <button aria-label="表格选择"><svg class="i20"><use href="#table"/></svg></button>
          <button class="slim" aria-label="更多表格"><svg class="i12"><use href="#down"/></svg></button>
        </div>
        <div class="tablebox">
          <table><colgroup><col class="c1"><col class="c2"><col class="c2"><col></colgroup>
            <thead><tr><th>x</th><th>y</th><th>Value</th><th></th></tr></thead>
            <tbody><tr><td>-2.0979E-6</td><td>8.7518E-7</td><td>6.4540E-4</td><td></td></tr></tbody>
          </table>
        </div>
      </section>
    </div>
  </main>
</div>
<footer class="status"><span class="mem">1.83 GB | 2.22 GB</span><span class="credit">CSDN @Leisureconfused</span></footer>
</body>
</html>
```
FILE: styles.css
```css
* { box-sizing: border-box; }
body {
  margin: 0;
  height: 100vh;
  display: flex;
  flex-direction: column;
  background: #fff;
  color: #111;
  font: 15px/20px "Noto Sans", "Noto Sans CJK SC", sans-serif;
  overflow: hidden;
}
h1, h2, h3, p, ul { margin: 0; padding: 0; font-weight: 400; }
button { border: 0; padding: 0; background: none; font: inherit; color: inherit; display: flex; align-items: center; justify-content: center; }
svg { display: block; flex: none; }
a { color: inherit; text-decoration: none; }
i { font-style: normal; }
.sprite { position: absolute; width: 0; height: 0; }
.i20 { width: 20px; height: 20px; }
.i18 { width: 18px; height: 18px; }
.i12 { width: 12px; height: 12px; }
.i8 { width: 8px; height: 8px; }
.glyph { font: 700 8px "Noto Sans", sans-serif; text-anchor: middle; fill: #4a78a8; }
.glyph.pink { fill: #c0548c; }
.glyph.big { font-size: 9px; }
.glyph.auto { fill: #2f5f9a; font-size: 8px; }
svg:has(> .glyph) { overflow: visible; }

.titlebar { height: 37px; flex: none; display: flex; padding: 0 10px; }
.quick { display: flex; align-items: center; height: 37px; padding-top: 6px; }
.quick button { width: 29px; }
.quick .narrow { width: 15px; }
.quick .bar { width: 2px; height: 16px; margin: 0 3px 6px 12px; background: #a8a8a8; }
.quick .narrow + .bar { margin: 0 0 6px 4px; }
.quick > svg { margin-bottom: 6px; }
.doc-title { flex: 1; padding-left: 126px; text-align: center; font-size: 16px; line-height: 38px; }
.winctl { display: flex; padding-top: 1px; }
.winctl button { width: 58px; height: 32px; }
.hot { background: #e5e5e5; }

.app { flex: 1; min-height: 0; display: flex; flex-direction: column; margin: 0 8px; padding: 0 5px 5px; background: #f9fbff; }
.tabs { display: flex; gap: 1px; height: 31px; flex: none; color: #2b579a; position: relative; z-index: 1; margin-bottom: -1px; }
.tabs a { padding: 0 16px; line-height: 32px; }
.tabs a.on { margin: 1px 0 0 3px; padding: 0 13px 0 12px; line-height: 30px; border: 1px solid #b4c8dc; border-bottom: 0; border-radius: 4px 4px 0 0; background: #fff; }
.tabs .file { width: 70px; height: 29px; gap: 2px; padding-bottom: 2px; background: #2b579a; border: 1px solid #1f4684; color: #fff; margin-right: -1px; }
.help { width: 14px; height: 14px; margin: 8px 6px 0 auto; background: #4a80b8; color: #fff; font-size: 12px; font-weight: 700; }
.ribbon { flex: none; display: flex; height: 114px; border: 1px solid #b4c8dc; background: linear-gradient(#fff, #fbfcfe); }
.group { margin: 8px 0 9px; border-right: 1px solid #b4c8dc; display: flex; flex-direction: column; justify-content: space-between; }
.group h2 { font-size: 15px; line-height: 14px; color: #999; text-align: center; }
.tools { display: flex; height: 76px; }
.g-plot { width: 125px; } .g-plot .tools { padding-left: 10px; }
.g-add { width: 280px; } .g-add .tools { padding-left: 12px; }
.g-attr { width: 123px; } .g-attr .tools { padding-left: 13px; }
.g-exp { width: 137px; } .g-exp .tools { padding-left: 8px; }
.big { width: 50px; flex-direction: column; justify-content: flex-start; white-space: nowrap; }
.g-plot .big + .big { width: 60px; }
.g-add .big { width: 64px; margin-left: 24px; }
.g-exp .big { width: 66px; } .g-exp .big + .big { width: 50px; }
.big .bi { height: 36px; margin-bottom: 3px; }
.big .i8 { margin-top: 3px; }
.stack { width: 60px; display: flex; flex-direction: column; gap: 8px; margin-top: -1px; }
.stack.wide { width: 78px; }
.stack button { justify-content: flex-start; gap: 2px; white-space: nowrap; height: 20px; }
.stack button:disabled { color: #b0b0b0; }
.g-add .stack:nth-child(3) { width: 30px; }

.work { flex: 1; min-height: 0; margin-top: 5px; display: grid; grid-template-columns: 414fr 621fr 845fr; gap: 6px; }
.panel { position: relative; min-width: 0; min-height: 0; display: flex; flex-direction: column; border: 1px solid #d0d2d8; }
.phead { display: flex; justify-content: space-between; height: 42px; flex: none; padding: 2px 5px 0 9px; color: #2b579a; }
.phead h2 { font-size: 27px; line-height: 38px; font-weight: 300; }
.pins { display: flex; align-items: center; gap: 6px; height: 38px; color: #c9cfdb; }
.pins.dark { color: #444; }
.pin { width: 10px; height: 16px; }
.mtools { display: flex; align-items: center; height: 20px; flex: none; padding-left: 2px; }
.mtools button { width: 29px; height: 20px; }
.mtools .slim { width: 16px; }
.mtools .slim + button { margin-left: 6px; }
.blue { color: #3d78b5; } .grey { color: #aaa; }
.r180 svg { transform: rotate(180deg); } .r90 svg { transform: rotate(90deg); } .r270 svg { transform: rotate(270deg); }
.treebox { flex: 1; min-height: 0; display: flex; margin: 6px 5px 12px; border: 1px solid #c8c8cc; background: #fff; overflow: hidden; }
.tree { flex: 1; list-style: none; }
.tree li { display: flex; align-items: center; height: 22px; padding-left: 29px; white-space: nowrap; }
.tree li svg { margin: 0 7px 0 5px; }
.tree .d1 { padding-left: 54px; } .tree .d2 { padding-left: 79px; }
.tree .step svg { margin-right: 15px; }
.tree .sel { background: #d9d9db; }
.tree em { margin-left: 9px; }
.tree i { width: 16px; height: 16px; }
.tree .open { background: #333; clip-path: polygon(11px 3px, 11px 11px, 3px 11px); }
.tree .shut { background: #777; clip-path: polygon(evenodd, 5px 2px, 12px 8px, 5px 14px, 5px 2px, 6px 4px, 6px 12px, 11px 8px, 6px 4px); }
.scroll { width: 21px; flex: none; display: flex; flex-direction: column; align-items: center; background: #f0f0f0; padding: 8px 0; }
.chev { width: 10px; height: 6px; fill: none; stroke: #888; stroke-width: 1.500; }
.thumb { width: 21px; background: #c9c9c9; }
.tree-scroll .thumb { flex: 480; margin: 233px 0 22px; }
.set-scroll .thumb { flex: 608; margin: 67px 0 43px; }
.marks { position: absolute; inset: 0; width: 100%; height: 100%; pointer-events: none; fill: #fb3b3b; }

.sub { color: #3f6ca8; font-size: 18px; line-height: 24px; padding-left: 9px; }
.plotbtn { align-self: flex-start; gap: 6px; height: 28px; margin-bottom: 2px; padding-left: 9px; }
.sbody { flex: 1; min-height: 0; display: flex; overflow: hidden; padding-right: 2px; }
.form { flex: 1; min-width: 0; }
.sec { display: flex; align-items: center; height: 34px; padding-left: 6px; background: #dfe9f5; font-size: 17px; }
.sec.cut { height: 9px; padding-left: 31px; line-height: 8px; align-items: flex-start; overflow: hidden; color: transparent; }
.sec.low { height: 32px; margin-bottom: 3px; }
.sec.last { margin: 0; }
.tri { width: 12px; height: 12px; margin-right: 13px; background: #444; clip-path: polygon(0 3px, 11px 3px, 6px 10px); }
.tri.shut { clip-path: polygon(evenodd, 2px 0, 8px 6px, 2px 12px, 2px 0, 3px 2px, 3px 10px, 7px 6px, 3px 2px); }
.acts { display: flex; align-items: center; margin-left: auto; padding-right: 12px; color: #111; }
.acts svg:nth-child(odd) { margin-left: 15px; }
.acts .i12 { margin-left: 7px; }
.body { padding: 12px 6px 14px 6px; }
.row { display: flex; align-items: center; }
.row label { width: 62px; }
.sel-wrap { flex: 1; display: flex; position: relative; }
.sel-wrap::after { content: ""; position: absolute; right: 4px; top: 11px; border: 5px solid transparent; border-top: 6px solid #111; border-bottom: 0; pointer-events: none; }
.sel-wrap.off::after { border-top-color: #ccc; }
select { appearance: none; flex: 1; height: 26px; border: 2px solid #9c9c9c; border-radius: 3px; background: linear-gradient(#f2f2f2, #e6e6e6); padding: 0 13px 1px; font: inherit; color: #111; opacity: 1; }
select:disabled { color: #808080; }
input[type=text] { width: 100%; height: 24px; border: 1px solid #d2d2d2; border-top-width: 2px; border-left-width: 2px; padding: 0 2px; font: inherit; background: #fff; color: #111; }
.b-pos input[type=text] { font-size: 16px; }
.goto { width: 25px; height: 28px; margin-left: 10px; border: 1px solid #999; border-radius: 3px; background: #eee; }
.b-data { padding-right: 5px; }
.check { display: flex; align-items: center; height: 20px; gap: 6px; padding-left: 1px; }
.check input { appearance: none; width: 18px; height: 16px; margin: 0; border: 1px solid #555; background: #fff; }
.check input:checked { background: #fff url("data:image/svg+xml,%3Csvg xmlns='http://www.w3.org/2000/svg' viewBox='0 0 16 14'%3E%3Cpath d='M3 7l4 4 6-9' fill='none' stroke='%23111' stroke-width='2'/%3E%3C/svg%3E"); }
.b-note { display: flex; flex-direction: column; padding-bottom: 16px; }
.b-note > input { margin: 8px 0 7px; }
fieldset { margin: 11px 1px 0; padding: 7px 12px 9px 12px; border: 1px solid #dcdfe6; border-radius: 4px; color: #777; min-width: 0; }
legend { margin-left: -5px; padding: 0 11px 0 9px; color: #111; }
fieldset .row { margin-top: 7px; }
.b-pos { display: flex; flex-direction: column; gap: 8px; padding-right: 18px; }
.b-pos .row label { width: 26px; flex: none; }
.b-style { display: flex; flex-direction: column; gap: 7px; padding-top: 10px; }
.b-style .row + .row { margin-top: 1px; }

.right { display: grid; grid-template-rows: 604fr 235fr; gap: 6px; min-width: 0; min-height: 0; }
.panel.graphics { border-color: #99cdfb; }
.ptabs { display: flex; flex: none; height: 38px; padding: 6px 5px 0; border-bottom: 1px solid #d0d2d8; gap: 10px; font-size: 18px; }
.msgs .ptabs { height: 39px; padding-top: 7px; }
.ptabs button { background: #ececec; padding: 0 5px; height: 31px; white-space: nowrap; }
.ptabs button.on { height: 32px; background: #f9fbff; border: 1px solid #d0d2d8; border-bottom: 0; color: #2b579a; padding: 0 4px; }
.ptabs button.sky { color: #1b87e0; }
.x { width: 12px; height: 12px; margin: 0 3px 0 9px; fill: none; stroke: #c9cfdb; stroke-width: 1.500; }
.ptabs .pins { margin-left: auto; height: 34px; }
.ptools { display: flex; align-items: center; flex: none; height: 36px; padding-left: 3px; }
.msgs .ptools { height: 38px; padding-left: 7px; }
.ptools button { width: 29px; height: 26px; }
.ptools .slim { width: 18px; }
.ptools .sep { width: 1px; height: 20px; background: #ccc; margin: 0 11px 0 7px; }
.msgs .sep { margin-right: 12px; }
.ptools .down { width: 22px; height: 22px; margin: 0 4px 0 3px; border: 1px solid #2f5f9a; border-radius: 3px; background: #b9d6f2; }
.ptools .deep { background: linear-gradient(#6f9fd2, #d4ecff); }
.chart { flex: 1; min-height: 0; width: 100%; background: #fff; font: 15px "DejaVu Sans", "Noto Sans CJK SC", sans-serif; fill: #222; }
.grid { stroke: #ececec; stroke-width: 2; fill: none; }
.axis { stroke: #000; fill: none; }
.sup { font-size: 11px; }
.blue-line { stroke: #2748e8; fill: none; }
.pink-line { stroke: #dc3370; stroke-width: 3; }
.pink-thin { stroke: #dc3370; stroke-width: 2; }
.tag path { fill: #fff; stroke: #000; stroke-width: 2; }
.tag text { text-anchor: middle; }
.tablebox { flex: 1; min-height: 0; margin: 0 12px 10px 11px; border: 1px solid #d0d2d8; background: #fcfdff; }
table { width: 100%; border-collapse: collapse; table-layout: fixed; }
.c1 { width: 82px; } .c2 { width: 75px; }
th { height: 33px; padding: 8px 6px 2px; text-align: left; font-weight: 400; line-height: 20px; background: linear-gradient(#fff 40%, #f2f3f5 42%, #eff0f2); border-right: 1px solid #dedede; border-bottom: 1px solid #ccc; }
td { height: 24px; padding: 1px 1px 0; font-size: 16px; line-height: 20px; background: #fff; border-right: 1px solid #aaa; border-bottom: 1px solid #aaa; white-space: nowrap; }
th:last-child, td:last-child { border-right: 0; }

.status { height: 40px; flex: none; margin: 0 4px 1px; padding: 0 11px 0 1058px; display: flex; align-items: center; justify-content: space-between; background: #f0eceb; }
.credit { color: #8d8b8b; font-size: 19px; padding-top: 8px; }
```
